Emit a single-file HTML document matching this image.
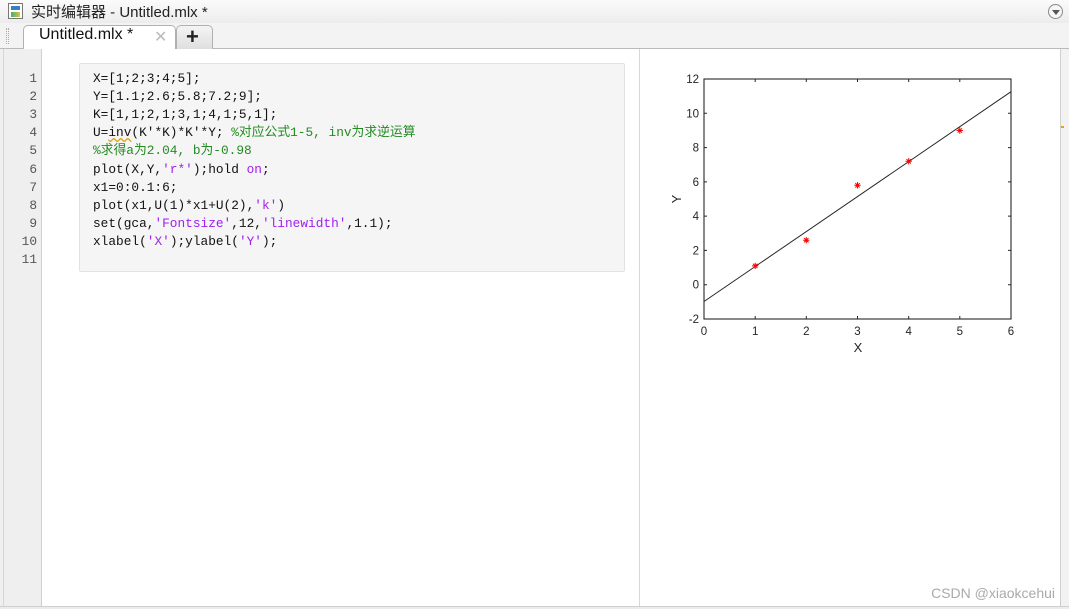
<!DOCTYPE html>
<html><head><meta charset="utf-8"><style>
*{margin:0;padding:0;box-sizing:border-box}
body{width:1069px;height:609px;overflow:hidden;background:#f0f0f0;font-family:"Liberation Sans","Noto Sans CJK SC",sans-serif;position:relative}
.abs{position:absolute}
#title{left:0;top:0;width:1069px;height:23px;background:linear-gradient(#fbfbfb,#ececec);font-size:15px;color:#222}
#tabbar{left:0;top:23px;width:1069px;height:26px;background:#f3f3f3;border-bottom:1px solid #b9b9b9}
.tab{top:2px;height:25px;border:1px solid #b0b0b0;border-bottom:none;border-radius:5px 5px 0 0}
#gutter{left:3px;top:49px;width:39px;height:558px;background:#efefef;border-left:1px solid #d6d6d6;border-right:1px solid #d0d0d0}
#editor{left:42px;top:49px;width:597px;height:558px;background:#fff}
#out{left:639px;top:49px;width:421px;height:558px;background:#fff;border-left:1px solid #d8d8d8}
#right{left:1060px;top:49px;width:9px;height:558px;background:#f2f2f2;border-left:1px solid #cfcfcf}
#bottom{left:0;top:606px;width:1069px;height:3px;background:#ececec;border-top:1px solid #cfcfcf}
.ln{position:absolute;right:5px;font-family:"Liberation Mono",monospace;font-size:12.8px;color:#555}
#code{left:79px;top:63px;width:546px;height:209px;background:#f5f5f5;border:1px solid #e2e2e2;border-radius:2px}
.cl{position:absolute;left:93px;font-family:"Liberation Mono","Noto Sans CJK SC",monospace;font-size:12.8px;color:#111;white-space:pre;line-height:16px}
.s{color:#a020f0}.c{color:#228b22}.k{color:#0e00ff}
</style></head><body>
<div id="title" class="abs">
 <div class="abs" style="left:8px;top:3px;width:15px;height:16px;border:1px solid #777;background:#fff"><div style="margin:2px;height:4px;background:#3a7fc0"></div><div style="margin:2px;height:5px;background:linear-gradient(90deg,#3cb371,#e0c040)"></div></div>
 <div class="abs" style="left:31px;top:1px;">实时编辑器 - Untitled.mlx *</div>
 <div class="abs" style="left:1048px;top:4px;width:15px;height:15px;border:1px solid #888;border-radius:50%;background:#f6f6f6"><div style="position:absolute;left:3px;top:5px;border-left:4px solid transparent;border-right:4px solid transparent;border-top:5px solid #555"></div></div>
</div>
<div id="tabbar" class="abs">
 <div class="abs" style="left:6px;top:5px;width:3px;height:16px;border-left:1px dotted #aaa;border-right:1px dotted #aaa"></div>
 <div class="abs tab" style="left:23px;width:153px;background:#fff"></div>
 <div class="abs" style="left:39px;top:3px;font-size:16px;color:#111">Untitled.mlx *</div>
 <div class="abs" style="left:154px;top:4px;font-size:16px;color:#bbb">✕</div>
 <div class="abs tab" style="left:176px;width:37px;background:linear-gradient(#f4f4f4,#dedede)"></div>
 <div class="abs" style="left:186px;top:1px;font-size:22px;font-weight:bold;color:#222">+</div>
</div>
<div id="gutter" class="abs"></div>
<div id="editor" class="abs"></div>
<div id="out" class="abs"></div>
<div id="right" class="abs"><div style="position:absolute;left:0;top:77px;width:3px;height:2px;background:#f0a000"></div></div>
<div id="bottom" class="abs"></div>
<div id="code" class="abs"></div>
<div class="abs" style="left:0;top:0;width:42px">
<div class="ln" style="top:71px">1</div><div class="ln" style="top:89px">2</div><div class="ln" style="top:107px">3</div><div class="ln" style="top:125px">4</div><div class="ln" style="top:143px">5</div><div class="ln" style="top:162px">6</div><div class="ln" style="top:180px">7</div><div class="ln" style="top:198px">8</div><div class="ln" style="top:216px">9</div><div class="ln" style="top:234px">10</div><div class="ln" style="top:252px">11</div>
</div>
<div class="cl" style="top:71px">X=[1;2;3;4;5];</div>
<div class="cl" style="top:89px">Y=[1.1;2.6;5.8;7.2;9];</div>
<div class="cl" style="top:107px">K=[1,1;2,1;3,1;4,1;5,1];</div>
<div class="cl" style="top:125px">U=<span style="text-decoration:underline wavy #e0a000">inv</span>(K'*K)*K'*Y; <span class="c">%对应公式1-5, inv为求逆运算</span></div>
<div class="cl" style="top:143px"><span class="c">%求得a为2.04, b为-0.98</span></div>
<div class="cl" style="top:162px">plot(X,Y,<span class="s">'r*'</span>);hold <span class="s">on</span>;</div>
<div class="cl" style="top:180px">x1=0:0.1:6;</div>
<div class="cl" style="top:198px">plot(x1,U(1)*x1+U(2),<span class="s">'k'</span>)</div>
<div class="cl" style="top:216px">set(gca,<span class="s">'Fontsize'</span>,12,<span class="s">'linewidth'</span>,1.1);</div>
<div class="cl" style="top:234px">xlabel(<span class="s">'X'</span>);ylabel(<span class="s">'Y'</span>);</div>
<svg class="abs" style="left:0;top:0" width="1069" height="609" font-family="Liberation Sans, sans-serif" font-size="11.5" fill="#262626">
<rect x="704" y="79" width="307" height="240" fill="#fff" stroke="#262626" stroke-width="1.1"/>
<g stroke="#262626" stroke-width="1">
<path d="M755.2 319v-3M806.3 319v-3M857.5 319v-3M908.7 319v-3M959.8 319v-3M755.2 79v3M806.3 79v3M857.5 79v3M908.7 79v3M959.8 79v3"/>
<path d="M704 113.3h3M704 147.6h3M704 181.9h3M704 216.1h3M704 250.4h3M704 284.7h3M1011 113.3h-3M1011 147.6h-3M1011 181.9h-3M1011 216.1h-3M1011 250.4h-3M1011 284.7h-3"/>
</g>
<line x1="704" y1="301.5" x2="1011" y2="91.7" stroke="#262626" stroke-width="1"/>
<g stroke="#f00" stroke-width="1">
<path d="M752 265.9h6.4M755.2 262.7v6.4M753 263.7l4.4 4.4M757.4 263.7l-4.4 4.4"/>
<path d="M803.1 240.2h6.4M806.3 237v6.4M804.1 238l4.4 4.4M808.5 238l-4.4 4.4"/>
<path d="M854.3 185.3h6.4M857.5 182.1v6.4M855.3 183.1l4.4 4.4M859.7 183.1l-4.4 4.4"/>
<path d="M905.5 161.3h6.4M908.7 158.1v6.4M906.5 159.1l4.4 4.4M910.9 159.1l-4.4 4.4"/>
<path d="M956.6 130.5h6.4M959.8 127.3v6.4M957.6 128.3l4.4 4.4M962 128.3l-4.4 4.4"/>
</g>
<g text-anchor="end">
<text x="699" y="83">12</text><text x="699" y="117.3">10</text><text x="699" y="151.6">8</text><text x="699" y="185.9">6</text><text x="699" y="220.1">4</text><text x="699" y="254.4">2</text><text x="699" y="288.7">0</text><text x="699" y="323">-2</text>
</g>
<g text-anchor="middle">
<text x="704" y="335">0</text><text x="755.2" y="335">1</text><text x="806.3" y="335">2</text><text x="857.5" y="335">3</text><text x="908.7" y="335">4</text><text x="959.8" y="335">5</text><text x="1011" y="335">6</text>
<text x="858" y="352" font-size="13">X</text>
<text transform="translate(681 199) rotate(-90)" font-size="13">Y</text>
</g>
<text x="1055" y="598" text-anchor="end" font-size="14" fill="#aaa">CSDN @xiaokcehui</text>
</svg>
</body></html>
